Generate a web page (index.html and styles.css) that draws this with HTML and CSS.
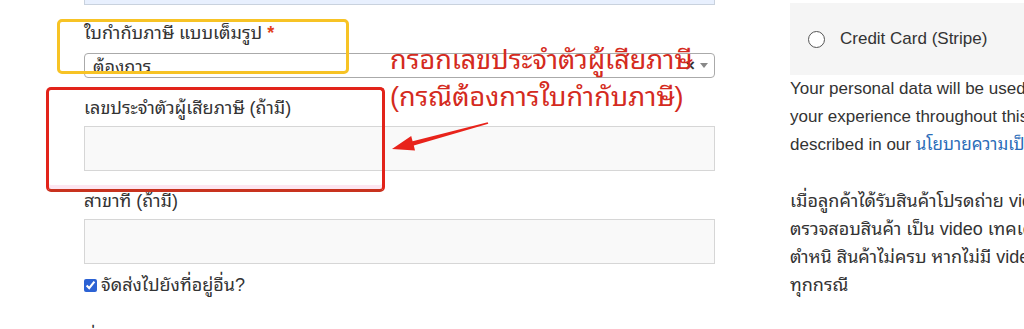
FILE: index.html
```html
<!DOCTYPE html>
<html lang="th">
<head>
    <meta charset="UTF-8">
    <meta name="viewport" content="width=device-width, initial-scale=1.0">
    <title>ชำระเงิน</title>
    <link rel="stylesheet" href="styles.css">
</head>
<body>
    <div class="page">
        <form class="billing">
            <div class="field field-prev">
                <input class="input-text input-filled" type="text">
            </div>
            <div class="field">
                <label class="field-label">ใบกำกับภาษี แบบเต็มรูป <abbr class="required">*</abbr></label>
                <div class="select-box">
                    <span class="select-text">ต้องการ</span>
                    <span class="select-clear">×</span>
                    <span class="select-arrow"></span>
                </div>
            </div>
            <div class="field">
                <label class="field-label">เลขประจำตัวผู้เสียภาษี (ถ้ามี)</label>
                <input class="input-text" type="text">
            </div>
            <div class="field field-last">
                <label class="field-label">สาขาที่ (ถ้ามี)</label>
                <input class="input-text" type="text">
            </div>
            <label class="ship-other">
                <input type="checkbox" checked>
                <span>จัดส่งไปยังที่อยู่อื่น?</span>
            </label>
            <label class="field-label next-label">ที่อยู่จัดส่ง</label>
        </form>

        <aside class="review">
            <div class="payment-method">
                <span class="radio"></span>
                <span>Credit Card (Stripe)</span>
            </div>
            <p class="privacy">Your personal data will be used to process your order, support<br>your experience throughout this website, and for other purposes<br>described in our <a href="#">นโยบายความเป็นส่วนตัว</a>.</p>
            <p class="notice">เมื่อลูกค้าได้รับสินค้าโปรดถ่าย video ขณะแกะกล่องพัสดุทุกครั้ง<br>ตรวจสอบสินค้า เป็น video เทคเดียวไม่มีการตัดต่อ หากสินค้ามี<br>ตำหนิ สินค้าไม่ครบ หากไม่มี video ทางร้านขอสงวนสิทธิ์ในการเคลม<br>ทุกกรณี</p>
        </aside>

        <!-- annotations drawn over the form -->
        <div class="mark mark-yellow"></div>
        <div class="mark mark-red"></div>
        <div class="hint">กรอกเลขประจำตัวผู้เสียภาษี<br>(กรณีต้องการใบกำกับภาษี)</div>
        <svg class="hint-arrow" width="106" height="36" viewBox="0 0 106 36">
            <polygon points="4,31 27,32.5 25.8,27.4 100.3,5.8 99.7,4.2 24.6,23.2 23.2,18 " fill="#e8231b"/>
        </svg>
    </div>
</body>
</html>
```

FILE: styles.css
```css
* {
    box-sizing: border-box;
}
body {
    margin: 0;
    overflow: hidden;
    background: #fff;
    color: #333;
    font-family: "Liberation Sans", Arial, "Noto Sans Thai Looped", "Noto Sans Thai", Tahoma, sans-serif;
    font-size: 17px;
}
.page {
    position: relative;
    display: flex;
    height: 329px;
    overflow: hidden;
}
.billing {
    flex: none;
    width: 715px;
    padding-left: 84px;
}
.review {
    flex: none;
    width: 520px;
    margin-left: 75px;
}
.field {
    margin-bottom: 18px;
}
.field-prev {
    margin-bottom: 16px;
}
.field-last {
    margin-bottom: 9px;
}
.field-label {
    display: block;
    font-size: 18px;
    line-height: 24px;
    margin-bottom: 6px;
}
.required {
    color: #e2401c;
    font-weight: bold;
    text-decoration: none;
    border: none;
}
.input-text {
    display: block;
    width: 100%;
    height: 45px;
    margin: 0;
    border: 1px solid #d6d6d6;
    background: #f9f9f9;
    font: inherit;
}
.input-filled {
    margin-top: -40px;
    background: #e8f0fe;
    border-color: #c9d2de;
}
.select-box {
    display: flex;
    align-items: center;
    height: 25px;
    margin-top: 8px;
    padding: 0 6px 0 8px;
    border: 1px solid #aaa;
    border-radius: 4px;
    background: #fff;
}
.select-text {
    flex: 1;
    font-size: 18px;
    line-height: 24px;
    padding-top: 2px;
}
.select-clear {
    font-size: 17px;
    font-weight: bold;
    color: #333;
    margin-right: 5px;
}
.select-arrow {
    width: 0;
    height: 0;
    border-left: 4px solid transparent;
    border-right: 4px solid transparent;
    border-top: 5px solid #888;
}
.ship-other {
    display: flex;
    align-items: center;
    font-size: 18px;
    line-height: 24px;
    margin-bottom: 29px;
}
.ship-other input {
    width: 13px;
    height: 13px;
    margin: 0 4px 0 0;
    accent-color: #2c62d4;
}
.next-label {
    margin: 0;
}
.payment-method {
    display: flex;
    align-items: center;
    gap: 15px;
    height: 72px;
    margin-top: 3px;
    padding-left: 18px;
    background: #f5f5f5;
}
.radio {
    width: 17px;
    height: 17px;
    border: 1.5px solid #555;
    border-radius: 50%;
    background: #fff;
}
.privacy,
.notice {
    margin: 0 0 28px;
    line-height: 28px;
    white-space: nowrap;
}
.notice {
    font-size: 18px;
}
.privacy a {
    color: #2a6cb8;
    text-decoration: none;
}
.mark {
    position: absolute;
    border-radius: 5px;
}
.mark-yellow {
    left: 57px;
    top: 19px;
    width: 292px;
    height: 55px;
    border: 3px solid #f7c325;
}
.mark-red {
    left: 46px;
    top: 87px;
    width: 339px;
    height: 105px;
    border: 3px solid #e2231a;
    border-bottom-color: #c8321e;
    box-shadow: inset 0 -4px 0 #fde6f1;
}
.hint {
    position: absolute;
    left: 390px;
    top: 42px;
    color: #d42a20;
    font-size: 27px;
    line-height: 37px;
}
.hint-arrow {
    position: absolute;
    left: 388px;
    top: 118px;
}
```
